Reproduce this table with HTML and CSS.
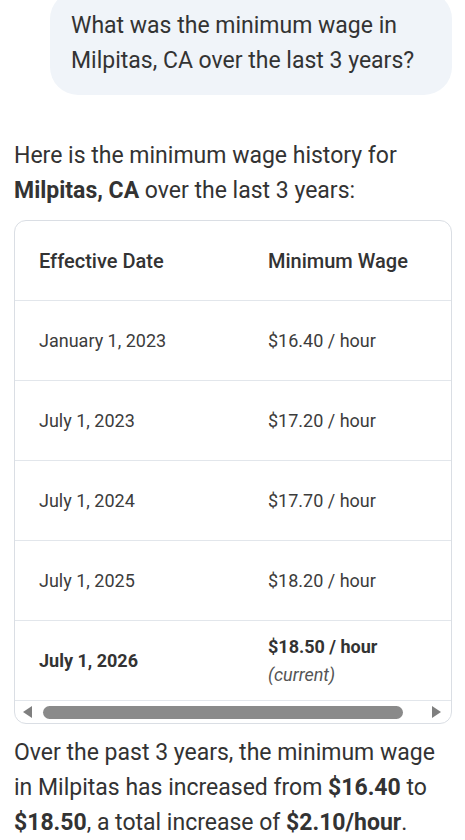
FILE: index.html
```html
<!DOCTYPE html>
<html lang="en">
<head>
	<meta charset="UTF-8">
	<title>Minimum wage</title>
	<link rel="stylesheet" href="styles.css">
</head>
<body>
	<div class="chat">
		<div class="bubble">What was the minimum wage in Milpitas, CA over the last 3 years?</div>

		<p class="intro">Here is the minimum wage history for <b>Milpitas, CA</b> over the last 3 years:</p>

		<div class="table-box">
			<div class="scroller">
				<table>
					<tr>
						<th class="col-date">Effective Date</th>
						<th>Minimum Wage</th>
					</tr>
					<tr>
						<td>January 1, 2023</td>
						<td>$16.40 / hour</td>
					</tr>
					<tr>
						<td>July 1, 2023</td>
						<td>$17.20 / hour</td>
					</tr>
					<tr>
						<td>July 1, 2024</td>
						<td>$17.70 / hour</td>
					</tr>
					<tr>
						<td>July 1, 2025</td>
						<td>$18.20 / hour</td>
					</tr>
					<tr class="now">
						<td><b>July 1, 2026</b></td>
						<td><b>$18.50 / hour</b><br><i>(current)</i></td>
					</tr>
				</table>
			</div>
			<div class="scrollbar">
				<span class="arr arr-l"></span>
				<span class="thumb"></span>
				<span class="arr arr-r"></span>
			</div>
		</div>

		<p class="outro">Over the past 3 years, the minimum wage in Milpitas has increased from <b>$16.40</b> to <b>$18.50</b>, a total increase of <b>$2.10/hour</b>.</p>
	</div>
</body>
</html>
```

FILE: styles.css
```css
body{
	margin: 0;
	background: #fff;
	font-family: Roboto, "Liberation Sans", sans-serif;
	color: #333;
}
.chat{
	padding: 0 13px 0 14px;
	font-size: 23px;
	line-height: 35px;
}
.bubble{
	margin: -9px 0 0 auto;
	width: 402px;
	box-sizing: border-box;
	padding: 17px 21px;
	background: #f0f4f9;
	border-radius: 28px;
}
p{
	margin: 0;
}
b{
	font-weight: 700;
}
.intro{
	margin-top: 43px;
}
.table-box{
	margin-top: 12px;
	border: 1px solid #dadee4;
	border-radius: 12px;
	overflow: hidden;
}
.scroller{
	overflow: hidden;
}
table{
	width: 480px;
	border-collapse: collapse;
	font-size: 18px;
	line-height: 28px;
	color: #3c3c3c;
}
th,td{
	height: 79px;
	padding: 0 24px;
	text-align: left;
	vertical-align: middle;
	border-bottom: 1px solid #e2e6eb;
}
th{
	font-size: 20px;
	font-weight: 500;
	color: #333;
}
.col-date{
	width: 181px;
}
.now b{
	color: #333;
}
.now i{
	color: #555;
}
.scrollbar{
	height: 22px;
	display: flex;
	align-items: center;
	padding: 0 10px 0 8px;
}
.arr{
	width: 0;
	height: 0;
	border-top: 6px solid transparent;
	border-bottom: 6px solid transparent;
}
.arr-l{
	border-right: 9px solid #7f7f7f;
}
.arr-r{
	border-left: 9px solid #7f7f7f;
	margin-left: auto;
}
.thumb{
	width: 360px;
	height: 13px;
	margin-left: 11px;
	background: #8a8a8a;
	border-radius: 7px;
}
.outro{
	margin-top: 11px;
}
```
